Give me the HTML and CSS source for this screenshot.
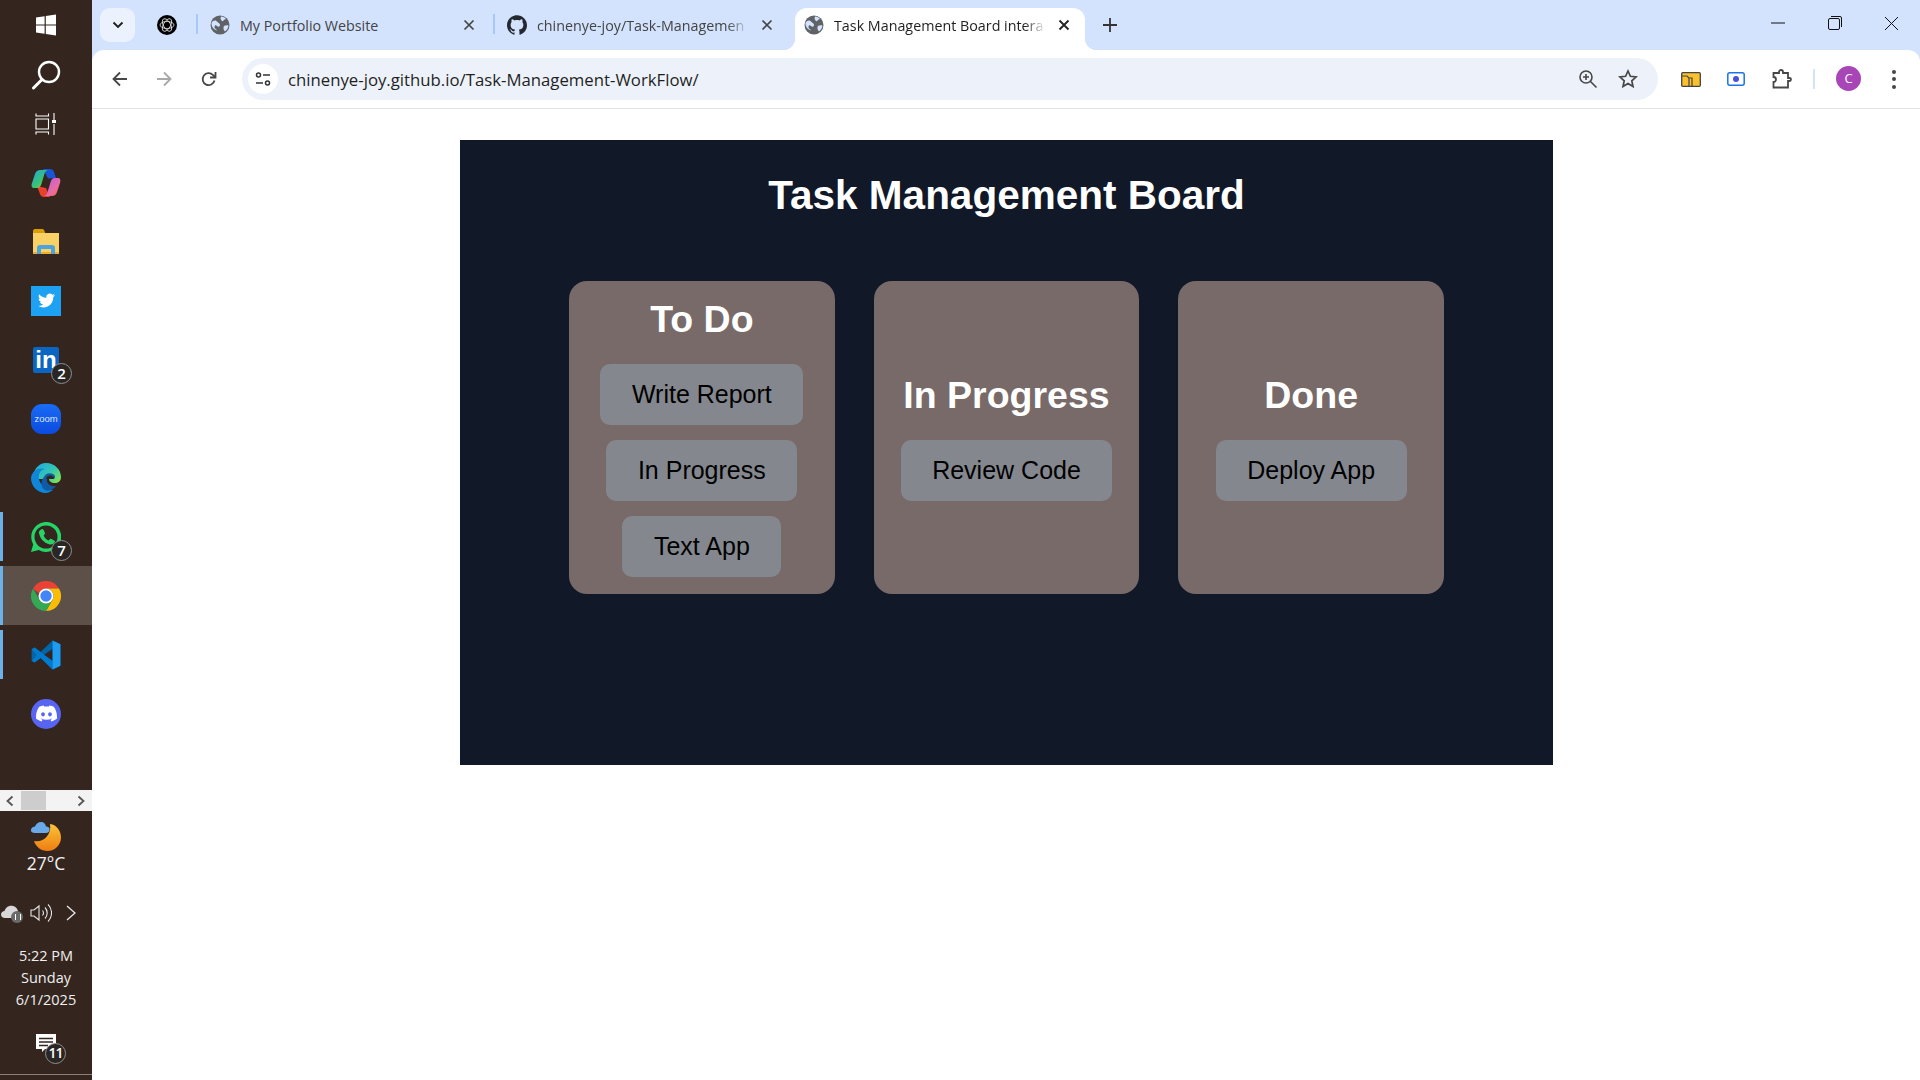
FILE: index.html
```html
<!DOCTYPE html>
<html>
<head>
  <title>Task Management Board</title>
  <link rel="stylesheet" href="styles.css">
</head>
<body>
  <div class="desktop">
    <!-- vertical windows taskbar -->
    <aside class="taskbar">
      <div class="start-items">
        <div class="start-item">
          <svg width="22" height="22" viewBox="0 0 22 22"><path fill="#fff" d="M1 3.6 9.6 2.3v8.1H1zM10.8 2.1 21 .6v9.8H10.8zM1 11.6h8.6v8.1L1 18.4zM10.8 11.6H21v9.8l-10.2-1.5z"/></svg>
        </div>
        <div class="start-item">
          <svg class="search-icon" width="30" height="30" viewBox="0 0 30 30"><circle cx="18" cy="12" r="10" fill="none" stroke="#fff" stroke-width="2.4"/><path d="M11 19.5 2.5 28" stroke="#fff" stroke-width="3" stroke-linecap="round"/></svg>
        </div>
        <div class="start-item">
          <svg width="22" height="22" viewBox="0 0 22 22" fill="none" stroke="#fff" stroke-width="1.1"><path d="M1 .5V3h12.500V.5M1 21.500V19h12.500v2.500M1 6h12.500v10H1z"/><path d="M19 0v7M19 11v11"/><rect x="17" y="7" width="4" height="3" fill="#fff" stroke="none"/></svg>
        </div>
      </div>
      <div class="app-list">
        <div class="app-item">
          <svg width="30" height="30" viewBox="0 0 30 30">
            <defs>
              <linearGradient id="cpA" x1="0" y1="0" x2="1" y2="1"><stop offset="0" stop-color="#1fa5e8"/><stop offset=".6" stop-color="#3cc46c"/><stop offset="1" stop-color="#f4c430"/></linearGradient>
              <linearGradient id="cpB" x1="0" y1="0" x2="1" y2="1"><stop offset="0" stop-color="#b25be0"/><stop offset=".6" stop-color="#e86aa8"/><stop offset="1" stop-color="#f56a3c"/></linearGradient>
            </defs>
            <path fill="#1a55d8" d="M12 1h7c2 0 3.500 1 4 3l2 6-8 .5z"/>
            <path fill="#e8402c" d="M6 18l3 8c.6 2 2 3 4 3h6l-4-9z"/>
            <path fill="url(#cpA)" d="M9 2h8c-2 .5-3 2-3.600 4l-3 10c-.6 2-2 4-4 4H3c-2 0-3-2-2-5l3-9C5 3 7 2 9 2z"/>
            <path fill="url(#cpB)" d="M21 28h-8c2-.5 3-2 3.600-4l3-10c.6-2 2-4 4-4H27c2 0 3 2 2 5l-3 9c-1 3-3 4-5 4z"/>
          </svg>
        </div>
        <div class="app-item">
          <svg width="28" height="26" viewBox="0 0 28 26"><path fill="#d99e00" d="M1 2c0-1 .6-2 2-2h7c1 0 2 .6 2.500 2l1 3H1z"/><path fill="#fad165" d="M1 4h26v21H1z"/><path fill="#eab02c" d="M1 23h26v2H1z"/><path fill="#4da3e0" d="M5 25v-6c0-2 1-3 3-3h12c2 0 3 1 3 3v6h-4v-5H9v5z"/></svg>
        </div>
        <div class="app-item">
          <div class="app-square twitter">
            <svg width="17" height="17" viewBox="0 0 24 24"><path fill="#fff" d="M23.953 4.57a10 10 0 01-2.825.775 4.958 4.958 0 002.163-2.723c-.951.555-2.005.959-3.127 1.184a4.92 4.92 0 00-8.384 4.482C7.69 8.095 4.067 6.13 1.64 3.162a4.822 4.822 0 00-.666 2.475c0 1.71.87 3.213 2.188 4.096a4.904 4.904 0 01-2.228-.616v.06a4.923 4.923 0 003.946 4.827 4.996 4.996 0 01-2.212.085 4.936 4.936 0 004.604 3.417 9.867 9.867 0 01-6.102 2.105c-.39 0-.779-.023-1.17-.067a13.995 13.995 0 007.557 2.209c9.053 0 13.998-7.496 13.998-13.985 0-.21 0-.42-.015-.63A9.935 9.935 0 0024 4.59z"/></svg>
          </div>
        </div>
        <div class="app-item">
          <div class="linkedin">in</div>
          <span class="badge">2</span>
        </div>
        <div class="app-item">
          <div class="zoom-logo">zoom</div>
        </div>
        <div class="app-item">
          <svg width="30" height="30" viewBox="0 0 30 30">
            <defs>
              <linearGradient id="edgeA" x1="0" y1="0" x2="1" y2=".8"><stop offset="0" stop-color="#1ca6e6"/><stop offset=".6" stop-color="#35c6b0"/><stop offset="1" stop-color="#7fe05a"/></linearGradient>
            </defs>
            <path fill="url(#edgeA)" d="M15 0c9 0 15 7 15 14 0 4-3 6-6 6-4 0-6-2-6-4H2C2 6 8 0 15 0z"/>
            <path fill="#0f86d8" d="M0 15C1 7 8 4 14 6c-5 1-7 5-6 10 1 6 7 10 14 11-3 2-5 3-7 3C6 30 0 23 0 15z"/>
            <path fill="#105ba6" d="M13 14c1-3 5-5 9-3 2 1 3 3 1 5h-7c-1 4 3 8 9 7-3 4-8 6-11 4-5-3-4-10-1-13z"/>
            <path fill="#34251f" d="M15 15c1-2 4-3 6-2 2 1 3 2 1 3h-6z"/>
          </svg>
        </div>
        <div class="app-item app-open">
          <svg width="30" height="30" viewBox="0 0 30 30"><path fill="#25d366" d="M0 30l2.200-7.600A15 15 0 1 1 7.800 28z"/><circle cx="15" cy="15" r="11.500" fill="#34251f"/><path fill="#25d366" d="M10 7.500c1-.8 2-.8 2.500.3l1.400 3c.3.800 0 1.300-.5 1.800l-.8 1c1 2.400 2.700 4 5 5l1.200-1.300c.5-.5 1-.6 1.700-.3l2.700 1.400c.8.400.9 1.200.3 2.200-1 1.700-3.300 2.500-5.600 1.600-5-1.800-8.300-5.200-9.500-9.800C7.200 10.300 8.200 8.600 10 7.500z"/></svg>
          <span class="badge">7</span>
        </div>
        <div class="app-item app-open app-active">
          <svg width="30" height="30" viewBox="0 0 30 30">
            <path fill="#ea4335" d="M2 7.500A15 15 0 0 1 28 7.500H15a7.500 7.500 0 0 0-7 4.800z"/>
            <path fill="#fbbc05" d="M28 7.500A15 15 0 0 1 15 30l6.500-11.250A7.500 7.500 0 0 0 21.500 11.250 7.500 7.500 0 0 0 15 7.500z"/>
            <path fill="#34a853" d="M2 7.500 8.500 18.750A7.500 7.500 0 0 0 21.500 18.750L15 30A15 15 0 0 1 2 7.500z"/>
            <circle cx="15" cy="15" r="7.500" fill="#fff"/><circle cx="15" cy="15" r="5.700" fill="#4285f4"/>
          </svg>
        </div>
        <div class="app-item app-open">
          <svg width="30" height="30" viewBox="0 0 100 100">
            <path fill="#0065a9" d="M72 2 32 40 12 25 2 31v38l10 6 20-15 40 38 26-12V14zM72 30v40L42 50z"/>
            <path fill="#007acc" d="M2 31l10-6 60 45v28L32 60 12 75 2 69l18-19z"/>
            <path fill="#1f9cf0" d="M72 2l26 12v72L72 98z"/>
          </svg>
        </div>
        <div class="app-item">
          <div class="discord">
            <svg width="21" height="21" viewBox="0 0 24 24"><path fill="#fff" d="M20.317 4.3698a19.7913 19.7913 0 00-4.8851-1.5152.0741.0741 0 00-.0785.0371c-.211.3753-.4447.8648-.6083 1.2495-1.8447-.2762-3.68-.2762-5.4868 0-.1636-.3933-.4058-.8742-.6177-1.2495a.077.077 0 00-.0785-.037 19.7363 19.7363 0 00-4.8852 1.515.0699.0699 0 00-.0321.0277C.5334 9.0458-.319 13.5799.0992 18.0578a.0824.0824 0 00.0312.0561c2.0528 1.5076 4.0413 2.4228 5.9929 3.0294a.0777.0777 0 00.0842-.0276c.4616-.6304.8731-1.2952 1.226-1.9942a.076.076 0 00-.0416-.1057c-.6528-.2476-1.2743-.5495-1.8722-.8923a.077.077 0 01-.0076-.1277c.1258-.0943.2517-.1923.3718-.2914a.0743.0743 0 01.0776-.0105c3.9278 1.7933 8.18 1.7933 12.0614 0a.0739.0739 0 01.0785.0095c.1202.099.246.1981.3728.2924a.077.077 0 01-.0066.1276 12.2986 12.2986 0 01-1.873.8914.0766.0766 0 00-.0407.1067c.3604.698.7719 1.3628 1.225 1.9932a.076.076 0 00.0842.0286c1.961-.6067 3.9495-1.5219 6.0023-3.0294a.077.077 0 00.0313-.0552c.5004-5.177-.8382-9.6739-3.5485-13.6604a.061.061 0 00-.0312-.0286zM8.02 15.3312c-1.1825 0-2.1569-1.0857-2.1569-2.419 0-1.3332.9555-2.4189 2.157-2.4189 1.2108 0 2.1757 1.0952 2.1568 2.419 0 1.3332-.9555 2.4189-2.1569 2.4189zm7.9748 0c-1.1825 0-2.1569-1.0857-2.1569-2.419 0-1.3332.9554-2.4189 2.1569-2.4189 1.2108 0 2.1757 1.0952 2.1568 2.419 0 1.3332-.946 2.4189-2.1568 2.4189Z"/></svg>
          </div>
        </div>
      </div>
      <div class="task-scroll">
        <svg width="10" height="12" viewBox="0 0 10 12"><path d="M7.500 1.500 2.500 6l5 4.500" fill="none" stroke="#555" stroke-width="1.800"/></svg>
        <div class="task-scroll-thumb"></div>
        <svg width="10" height="12" viewBox="0 0 10 12"><path d="M2.500 1.500 7.500 6l-5 4.500" fill="none" stroke="#555" stroke-width="1.800"/></svg>
      </div>
      <div class="weather">
        <svg width="32" height="31" viewBox="0 0 32 31">
          <defs><linearGradient id="moon" x1="0" y1="0" x2="0" y2="1"><stop offset="0" stop-color="#fcc33a"/><stop offset="1" stop-color="#ee7d10"/></linearGradient></defs>
          <path fill="url(#moon)" d="M20 3c7 1 11 7 11 13.500C31 24 25 30 17.500 30 11 30 6 26 4 20c9 2 18-6 16-17z"/>
          <path fill="#6aa9e8" d="M5 12c-3 0-4.500-1.500-4-3.500S3.500 5.500 5 5.500C6 2.500 9 .5 12 1c2 .5 3.500 2 4 4.500 2.500 0 4 1.500 3.500 3.500-.3 1.800-1.500 3-3.500 3z"/>
        </svg>
        <div class="temp">27°C</div>
      </div>
      <div class="tray">
        <span class="tray-cloud">
          <svg width="19" height="16" viewBox="0 0 19 16"><path fill="#d8d8d8" d="M4 13C1.500 13 0 11.500 0 9.500S2 6 3.500 6C4.500 2.500 8 0 12 1c3 .8 5 3 5 6v6z"/></svg>
          <span class="tray-pause"></span>
        </span>
        <svg width="22" height="22" viewBox="0 0 22 22" fill="none" stroke="#e8e8e8" stroke-width="1.100"><path d="M1 8v6h3l5 4V4L4 8z"/><path d="M12.500 8.500a4 4 0 0 1 0 5M15 5.500a8 8 0 0 1 0 11M18 2.500a12 12 0 0 1 0 17"/></svg>
        <svg class="tray-more" width="12" height="18" viewBox="0 0 12 18" fill="none" stroke="#e8e8e8" stroke-width="1.300"><path d="M2 2l8 7-8 7"/></svg>
      </div>
      <div class="clock">
        <div>5:22 PM</div>
        <div>Sunday</div>
        <div>6/1/2025</div>
      </div>
      <div class="notify">
        <svg width="20" height="20" viewBox="0 0 20 20"><path fill="#fff" d="M0 0h20v15H9l-3 3v-3H0z"/><path stroke="#34251f" stroke-width="1.300" d="M3 4.500h14M3 8h14M3 11.500h9"/></svg>
        <span class="badge badge-wide">11</span>
      </div>
    </aside>

    <div class="browser">
      <div class="tabstrip">
        <div class="tab-search">
          <svg width="12" height="8" viewBox="0 0 12 8"><path d="M1.500 1.500 6 6l4.500-4.500" fill="none" stroke="#1f1f1f" stroke-width="1.900"/></svg>
        </div>
        <div class="tab-pinned">
          <svg width="20" height="20" viewBox="0 0 20 20"><circle cx="10" cy="10" r="10" fill="#000"/><g fill="none" stroke="#e8e8e8" stroke-width=".8"><ellipse cx="10" cy="10" rx="7" ry="3.500"/><ellipse cx="10" cy="10" rx="7" ry="3.500" transform="rotate(60 10 10)"/><ellipse cx="10" cy="10" rx="7" ry="3.500" transform="rotate(120 10 10)"/></g></svg>
        </div>
        <div class="tab tab-portfolio">
          <svg class="tab-icon" width="20" height="20" viewBox="0 0 20 20"><use href="#globe"/></svg>
          <span class="tab-title">My Portfolio Website</span>
          <svg class="tab-close" width="12" height="12" viewBox="0 0 12 12"><path d="M1.500 1.500l9 9m0-9-9 9" stroke="#444" stroke-width="1.700"/></svg>
        </div>
        <div class="tab tab-github">
          <svg class="tab-icon" width="20" height="20" viewBox="0 0 24 24"><path fill="#24292f" d="M12 .297c-6.630 0-12 5.373-12 12 0 5.303 3.438 9.800 8.205 11.385.6.113.82-.258.82-.577 0-.285-.01-1.040-.015-2.040-3.338.724-4.042-1.610-4.042-1.610C4.422 18.070 3.633 17.700 3.633 17.700c-1.087-.744.084-.729.084-.729 1.205.084 1.838 1.236 1.838 1.236 1.070 1.835 2.809 1.305 3.495.998.108-.776.417-1.305.76-1.605-2.665-.3-5.466-1.332-5.466-5.930 0-1.310.465-2.380 1.235-3.220-.135-.303-.54-1.523.105-3.176 0 0 1.005-.322 3.300 1.230.96-.267 1.980-.399 3-.405 1.020.006 2.040.138 3 .405 2.280-1.552 3.285-1.230 3.285-1.230.645 1.653.24 2.873.12 3.176.765.84 1.230 1.910 1.230 3.220 0 4.610-2.805 5.625-5.475 5.920.42.36.81 1.096.81 2.220 0 1.606-.015 2.896-.015 3.286 0 .315.21.69.825.57C20.565 22.092 24 17.592 24 12.297c0-6.627-5.373-12-12-12"/></svg>
          <span class="tab-title">chinenye-joy/Task-Managemen</span>
          <svg class="tab-close" width="12" height="12" viewBox="0 0 12 12"><path d="M1.500 1.500l9 9m0-9-9 9" stroke="#444" stroke-width="1.700"/></svg>
        </div>
        <div class="tab tab-active">
          <svg class="tab-icon" width="20" height="20" viewBox="0 0 20 20"><use href="#globe"/></svg>
          <span class="tab-title">Task Management Board intera</span>
          <svg class="tab-close" width="12" height="12" viewBox="0 0 12 12"><path d="M1.500 1.500l9 9m0-9-9 9" stroke="#222" stroke-width="1.800"/></svg>
        </div>
        <div class="new-tab">
          <svg width="14" height="14" viewBox="0 0 14 14"><path d="M7 0v14M0 7h14" stroke="#333" stroke-width="1.800"/></svg>
        </div>
        <div class="window-controls">
          <div class="win-btn"><svg width="14" height="2" viewBox="0 0 14 2"><path d="M0 1h14" stroke="#111" stroke-width="1"/></svg></div>
          <div class="win-btn"><svg width="14" height="14" viewBox="0 0 14 14" fill="none" stroke="#111" stroke-width="1"><rect x=".5" y="2.500" width="11" height="11" rx="1.500"/><path d="M3 .5h9a1.500 1.500 0 0 1 1.500 1.500v9"/></svg></div>
          <div class="win-btn"><svg width="15" height="15" viewBox="0 0 15 15"><path d="M1 1l13 13m0-13L1 14" stroke="#111" stroke-width="1"/></svg></div>
        </div>
      </div>

      <div class="toolbar">
        <div class="tool">
          <svg width="16" height="16" viewBox="0 0 16 16" fill="none" stroke="#474747" stroke-width="1.800"><path d="M15 8H2M8 1.500 1.500 8 8 14.500"/></svg>
        </div>
        <div class="tool">
          <svg width="16" height="16" viewBox="0 0 16 16" fill="none" stroke="#a8a8a8" stroke-width="1.800"><path d="M1 8h13M8 1.500 14.500 8 8 14.500"/></svg>
        </div>
        <div class="tool tool-reload">
          <svg width="16" height="16" viewBox="0 0 16 16" fill="none" stroke="#474747" stroke-width="1.800"><path d="M13.500 9.500a6 6 0 1 1-1.500-5.500L14 6"/><path d="M14.500 1v5.500H9" /></svg>
        </div>
        <div class="omnibox">
          <div class="site-chip">
            <svg width="16" height="14" viewBox="0 0 16 14" fill="none" stroke="#333" stroke-width="1.500"><circle cx="3.500" cy="3" r="2"/><path d="M8 3h7M1 11h7"/><circle cx="12.500" cy="11" r="2"/></svg>
          </div>
          <span class="url">chinenye-joy.github.io/Task-Management-WorkFlow/</span>
          <svg class="omni-zoom" width="20" height="20" viewBox="0 0 20 20" fill="none" stroke="#474747" stroke-width="1.600"><circle cx="8" cy="8" r="6"/><path d="M12.500 12.500 18.500 18.500M5 8h6M8 5v6"/></svg>
          <svg class="omni-star" width="20" height="20" viewBox="0 0 20 20" fill="none" stroke="#474747" stroke-width="1.700"><path d="M10 2l2.400 5.300 5.700.6-4.300 3.900 1.200 5.700L10 14.600l-5 2.900 1.200-5.700L1.900 7.900l5.700-.6z"/></svg>
        </div>
        <div class="tool tool-first">
          <svg width="20" height="15" viewBox="0 0 20 15"><rect x=".7" y=".7" width="18.600" height="13.600" rx="1" fill="#fbc02d" stroke="#444" stroke-width="1.300"/><path d="M1 4h5l2 2v8M8 6h3v8" fill="none" stroke="#444" stroke-width="1.200"/></svg>
        </div>
        <div class="tool tool-record">
          <svg width="18" height="14" viewBox="0 0 18 14"><rect x=".8" y=".8" width="16.400" height="12.400" rx="2" fill="#fff" stroke="#1a73e8" stroke-width="1.500"/><circle cx="9" cy="7" r="3" fill="#4a50d8"/></svg>
        </div>
        <div class="tool tool-puzzle">
          <svg width="20" height="20" viewBox="0 0 20 20" fill="none" stroke="#474747" stroke-width="1.800"><path d="M1.500 4H7V3a2 2 0 0 1 4 0v1h5v5h1.500a1.500 1.500 0 0 1 0 3H16v6.500H1.500V13a2.500 2.500 0 0 0 0-5z"/></svg>
        </div>
        <div class="tool-sep"></div>
        <div class="avatar">C</div>
        <div class="tool-menu">
          <span></span><span></span><span></span>
        </div>
      </div>

      <main class="page">
        <div class="board">
          <h1 class="board-title">Task Management Board</h1>
          <div class="columns">
            <div class="column">
              <h2>To Do</h2>
              <div class="task">Write Report</div>
              <div class="task">In Progress</div>
              <div class="task">Text App</div>
            </div>
            <div class="column">
              <h2>In Progress</h2>
              <div class="task">Review Code</div>
            </div>
            <div class="column">
              <h2>Done</h2>
              <div class="task">Deploy App</div>
            </div>
          </div>
        </div>
      </main>
    </div>
  </div>

  <svg class="defs" width="0" height="0">
    <symbol id="globe" viewBox="0 0 20 20">
      <circle cx="10" cy="10" r="9.500" fill="#5f6368"/>
      <path fill="#d3e3fd" d="M3 6c2-1 3.500-.5 4.500 1s2.500 1 2.500 3-2 2-3 1-2.500-1-2.500 1 2 2 2.500 3.500c-2.500-.5-5-3-5.500-6-.2-1.500.5-2.500 1.500-3.500zM11 1.500c2 0 4 1 5 2.500-1 .5-2 .5-2.500 1.500s-1.500 1-2 0-1.500-1.500-.5-4zM14 11c1.500-1 3-1 4.500-.5-.3 2.500-1.500 4.500-3.500 6-1-1-1.500-2-1.500-3s0-2 .5-2.500z"/>
    </symbol>
  </svg>
</body>
</html>
```

FILE: styles.css
```css
* {
  box-sizing: border-box;
}

body {
  margin: 0;
  width: 1920px;
  height: 1080px;
  overflow: hidden;
  background-color: #fff;
  font-family: "Open Sans", sans-serif;
}

.defs {
  display: block;
}

.desktop {
  display: flex;
  height: 1080px;
}

/* taskbar */
.taskbar {
  position: relative;
  flex: 0 0 92px;
  display: flex;
  flex-direction: column;
  height: 1080px;
  background-color: #34251f;
  color: #f0f0f0;
}

.taskbar::after {
  content: "";
  position: absolute;
  left: 0;
  right: 0;
  bottom: 5px;
  height: 1px;
  background-color: #8a807b;
}

.start-items {
  height: 153px;
  padding-bottom: 5px;
}

.start-item {
  display: flex;
  align-items: center;
  justify-content: center;
  height: 49.5px;
}

.search-icon {
  margin-top: 2px;
}

.app-list {
  height: 637px;
}

.app-item {
  position: relative;
  display: flex;
  align-items: center;
  justify-content: center;
  height: 59px;
}

.app-open::before {
  content: "";
  position: absolute;
  left: 0;
  top: 5px;
  bottom: 5px;
  width: 3px;
  background-color: #6cb1e8;
}

.app-active {
  background-color: #5c5048;
}

.app-active::before {
  top: 0;
  bottom: 0;
}

.app-square {
  display: flex;
  align-items: center;
  justify-content: center;
  width: 30px;
  height: 30px;
}

.twitter {
  background-color: #1da1f2;
}

.linkedin {
  width: 26px;
  height: 26px;
  border-radius: 2px;
  background-color: #0a66c2;
  color: #fff;
  font: bold 24px/26px "Liberation Sans", sans-serif;
  text-align: center;
}

.zoom-logo {
  width: 30px;
  height: 30px;
  border-radius: 11px;
  background: linear-gradient(#1a6cf5, #0b4be0);
  color: #d8e6ff;
  font: 9.500px/30px "Liberation Sans", sans-serif;
  text-align: center;
}

.discord {
  display: flex;
  align-items: center;
  justify-content: center;
  width: 30px;
  height: 30px;
  border-radius: 50%;
  background-color: #5865f2;
}

.badge {
  position: absolute;
  left: 51px;
  top: 33px;
  width: 21px;
  height: 21px;
  border-radius: 50%;
  border: 1px solid #8f8f8f;
  background-color: #2a2624;
  color: #fff;
  font-size: 15px;
  font-weight: 600;
  line-height: 18px;
  text-align: center;
}

.task-scroll {
  display: flex;
  align-items: center;
  flex: 0 0 21px;
  padding: 0 5px;
  background-color: #f3f3f3;
}

.task-scroll-thumb {
  width: 25px;
  height: 19px;
  margin-left: 6px;
  margin-right: 30px;
  background-color: #cdcdcd;
}

.weather {
  height: 72px;
  padding-top: 10px;
  text-align: center;
}

.weather svg {
  display: block;
  margin: 0 auto;
}

.temp {
  font-size: 17.500px;
  line-height: 22px;
}

.tray {
  display: flex;
  align-items: center;
  height: 40px;
  margin-top: 10px;
  padding-left: 1px;
}

.tray-cloud {
  position: relative;
  display: block;
  flex: 0 0 29px;
  height: 22px;
  padding-top: 2px;
}

.tray-pause {
  position: absolute;
  left: 10px;
  top: 9px;
  width: 12px;
  height: 12px;
  border-radius: 50%;
  background-color: #6a6a6a;
}

.tray-pause::before {
  content: "";
  position: absolute;
  left: 4px;
  top: 3px;
  width: 4px;
  height: 6px;
  border-left: 1px solid #fff;
  border-right: 1px solid #fff;
}

.tray-more {
  margin-left: 13px;
}

.clock {
  margin-top: 12px;
  font-size: 14.500px;
  line-height: 22px;
  text-align: center;
}

.notify {
  position: relative;
  display: flex;
  justify-content: center;
  margin-top: 23px;
}

.badge-wide {
  left: 45px;
  top: 9px;
  font-size: 14px;
  letter-spacing: -1px;
}

/* browser chrome */
.browser {
  flex: 1;
  display: flex;
  flex-direction: column;
  min-width: 0;
  background-color: #d3e3fd;
}

.tabstrip {
  display: flex;
  align-items: flex-end;
  flex: 0 0 50px;
  color: #444;
  font-size: 14.300px;
}

.tab-search {
  display: flex;
  align-items: center;
  justify-content: center;
  flex: 0 0 35px;
  height: 34px;
  margin: 0 0 8px 8px;
  border-radius: 10px;
  background-color: #ecf2fd;
}

.tab-pinned {
  display: flex;
  align-items: center;
  flex: 0 0 61px;
  height: 34px;
  margin-bottom: 8px;
  padding-left: 22px;
}

.tab {
  position: relative;
  display: flex;
  align-items: center;
  min-width: 0;
  height: 42px;
  padding-bottom: 8px;
}

.tab-portfolio::before,
.tab-github::before {
  content: "";
  position: absolute;
  left: 0;
  top: 6px;
  width: 2px;
  height: 20px;
  background-color: #a8c7fa;
}

.tab-portfolio {
  flex: 0 0 297px;
  padding-left: 14px;
  padding-right: 18px;
}

.tab-github {
  flex: 0 0 302px;
  padding-left: 14px;
  padding-right: 22px;
}

.tab-active {
  flex: 0 0 290px;
  padding-left: 9px;
  padding-right: 15px;
  background-color: #fff;
  border-radius: 12px 12px 0 0;
  color: #1f1f1f;
}

.tab-active::before,
.tab-active::after {
  content: "";
  position: absolute;
  bottom: 0;
  width: 12px;
  height: 12px;
}

.tab-active::before {
  left: -12px;
  background: radial-gradient(circle at 0 0, transparent 12px, #fff 12.500px);
}

.tab-active::after {
  right: -12px;
  background: radial-gradient(circle at 100% 0, transparent 12px, #fff 12.500px);
}

.tab-icon {
  flex: none;
}

.tab-title {
  flex: 1;
  min-width: 0;
  margin: 0 8px 0 10px;
  white-space: nowrap;
}

.tab-github .tab-title,
.tab-active .tab-title {
  -webkit-mask-image: linear-gradient(to right, #000 190px, transparent 212px);
  mask-image: linear-gradient(to right, #000 190px, transparent 212px);
}

.tab-close {
  flex: none;
}

.new-tab {
  display: flex;
  align-items: center;
  justify-content: center;
  flex: 0 0 34px;
  height: 42px;
  margin-left: 8px;
  padding-bottom: 8px;
}

.window-controls {
  display: flex;
  margin-left: auto;
  align-self: flex-start;
}

.win-btn {
  display: flex;
  align-items: center;
  justify-content: center;
  width: 57px;
  height: 46px;
}

.toolbar {
  display: flex;
  align-items: center;
  flex: 0 0 59px;
  padding-left: 6px;
  background-color: #fff;
  border-bottom: 1px solid #e3e3e3;
  border-radius: 12px 12px 0 0;
}

.tool {
  display: flex;
  align-items: center;
  justify-content: center;
  flex: 0 0 44px;
  height: 42px;
}

.tool-reload {
  margin-left: 1px;
}

.tool-first {
  margin-left: 11px;
}

.tool-record {
  margin-left: 1px;
}

.tool-puzzle {
  margin-left: 2px;
}

.omnibox {
  display: flex;
  align-items: center;
  flex: 0 0 1416px;
  height: 42px;
  margin-left: 11px;
  padding-left: 6px;
  border-radius: 21px;
  background-color: #edf2fa;
}

.site-chip {
  display: flex;
  align-items: center;
  justify-content: center;
  flex: 0 0 30px;
  height: 30px;
  border-radius: 50%;
  background-color: #fff;
}

.url {
  flex: 1;
  margin-left: 10px;
  color: #1f1f1f;
  font-size: 16.750px;
  white-space: nowrap;
}

.omni-zoom {
  margin-right: 20px;
}

.omni-star {
  margin-right: 20px;
}

.tool-sep {
  flex: none;
  width: 2px;
  height: 20px;
  margin: 0 21px 0 9px;
  background-color: #d3e3fd;
}

.avatar {
  flex: none;
  width: 25px;
  height: 25px;
  margin-top: -2px;
  border-radius: 50%;
  background-color: #a846b8;
  color: #fff;
  font-size: 13px;
  line-height: 25px;
  text-align: center;
}

.tool-menu {
  display: flex;
  flex-direction: column;
  gap: 3.500px;
  margin-left: 31px;
}

.tool-menu span {
  width: 4px;
  height: 4px;
  border-radius: 50%;
  background-color: #474747;
}

/* the page */
.page {
  flex: 1;
  padding-top: 31px;
  background-color: #fff;
  font-family: "Liberation Sans", Arial, sans-serif;
}

.board {
  width: 1093px;
  height: 625px;
  margin: 0 auto;
  padding: 31px 0 0 1px;
  background-color: #111827;
}

.board-title {
  margin: 0;
  color: #fff;
  font-size: 40.500px;
  line-height: 48px;
  text-align: center;
}

.columns {
  display: flex;
  justify-content: center;
  gap: 39px;
  margin-top: 62px;
}

.column {
  display: flex;
  flex-direction: column;
  align-items: center;
  justify-content: center;
  gap: 15px;
  width: 265.670px;
  height: 313px;
  border-radius: 18px;
  background-color: #786a69;
}

.column h2 {
  margin: 1px 0 10px;
  color: #fff;
  font-size: 37.500px;
  line-height: 40px;
}

.task {
  height: 61px;
  padding: 0 31.500px;
  border-radius: 10px;
  background-color: #84888e;
  color: #000;
  font-size: 25px;
  line-height: 61px;
}
```
